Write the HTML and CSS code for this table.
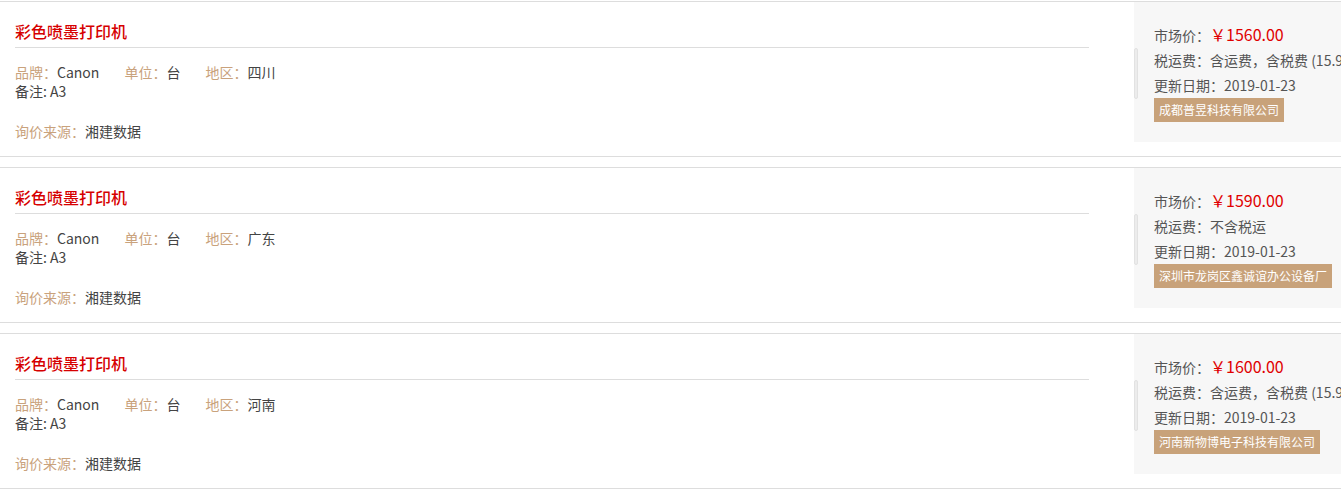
FILE: index.html
```html
<!DOCTYPE html>
<html lang="zh-CN">
<head>
<meta charset="utf-8">
<title>彩色喷墨打印机</title>
<link rel="stylesheet" href="styles.css">
</head>
<body>
<div class="list">
  <div class="item">
    <div class="info">
      <div class="title">彩色喷墨打印机</div>
      <div class="fields">
        <span class="field"><span class="label">品牌：</span>Canon</span>
        <span class="field"><span class="label">单位：</span>台</span>
        <span class="field"><span class="label">地区：</span>四川</span>
      </div>
      <div class="note">备注: A3</div>
      <div class="source"><span class="label">询价来源：</span>湘建数据</div>
    </div>
    <div class="panel">
      <div class="thumb"></div>
      <div class="line">市场价：<span class="price">￥1560.00</span></div>
      <div class="line">税运费：含运费，含税费 (15.9%)</div>
      <div class="line">更新日期：2019-01-23</div>
      <span class="badge">成都普昱科技有限公司</span>
    </div>
  </div>
  <div class="item">
    <div class="info">
      <div class="title">彩色喷墨打印机</div>
      <div class="fields">
        <span class="field"><span class="label">品牌：</span>Canon</span>
        <span class="field"><span class="label">单位：</span>台</span>
        <span class="field"><span class="label">地区：</span>广东</span>
      </div>
      <div class="note">备注: A3</div>
      <div class="source"><span class="label">询价来源：</span>湘建数据</div>
    </div>
    <div class="panel">
      <div class="thumb"></div>
      <div class="line">市场价：<span class="price">￥1590.00</span></div>
      <div class="line">税运费：不含税运</div>
      <div class="line">更新日期：2019-01-23</div>
      <span class="badge">深圳市龙岗区鑫诚谊办公设备厂</span>
    </div>
  </div>
  <div class="item">
    <div class="info">
      <div class="title">彩色喷墨打印机</div>
      <div class="fields">
        <span class="field"><span class="label">品牌：</span>Canon</span>
        <span class="field"><span class="label">单位：</span>台</span>
        <span class="field"><span class="label">地区：</span>河南</span>
      </div>
      <div class="note">备注: A3</div>
      <div class="source"><span class="label">询价来源：</span>湘建数据</div>
    </div>
    <div class="panel">
      <div class="thumb"></div>
      <div class="line">市场价：<span class="price">￥1600.00</span></div>
      <div class="line">税运费：含运费，含税费 (15.9%)</div>
      <div class="line">更新日期：2019-01-23</div>
      <span class="badge">河南新物博电子科技有限公司</span>
    </div>
  </div>
</div>
</body>
</html>
```
FILE: styles.css
```css
html, body {
  margin: 0;
  padding: 0;
  background: #fff;
  overflow: hidden;
}
body {
  font-family: "Noto Sans CJK SC", "Noto Sans", sans-serif;
  font-size: 14px;
  color: #444;
}
.list {
  padding-top: 1px;
  width: 1341px;
}
.item {
  display: flex;
  justify-content: space-between;
  align-items: flex-start;
  height: 154px;
  border-top: 1px solid #ddd;
  border-bottom: 1px solid #ddd;
  margin-bottom: 10px;
}
.info {
  width: 1074px;
  padding-left: 15px;
}
.title {
  margin-top: 17px;
  height: 24px;
  line-height: 24px;
  padding-bottom: 4px;
  border-bottom: 1px solid #ddd;
  font-size: 16px;
  font-weight: 500;
  color: #d60000;
}
.fields {
  display: flex;
  gap: 25px;
  margin-top: 14px;
  line-height: 20px;
}
.label {
  color: #c9a27c;
}
.note {
  line-height: 19px;
  color: #444;
}
.source {
  margin-top: 20px;
  line-height: 20px;
}
.panel {
  position: relative;
  width: 207px;
  box-sizing: border-box;
  padding: 20px 0 20px 20px;
  background: #f7f7f7;
  white-space: nowrap;
  overflow: hidden;
}
.thumb {
  position: absolute;
  left: 0;
  top: 46px;
  width: 2px;
  height: 49px;
  border: 1px solid #e2e2e2;
  border-radius: 2px;
  background: #ececec;
}
.line {
  line-height: 25px;
  color: #555;
}
.price {
  font-size: 16px;
  color: #e00000;
}
.badge {
  display: inline-block;
  vertical-align: top;
  height: 24px;
  line-height: 24px;
  padding: 0 5px;
  background: #c8a27a;
  color: #fff;
  font-size: 12px;
}
```
